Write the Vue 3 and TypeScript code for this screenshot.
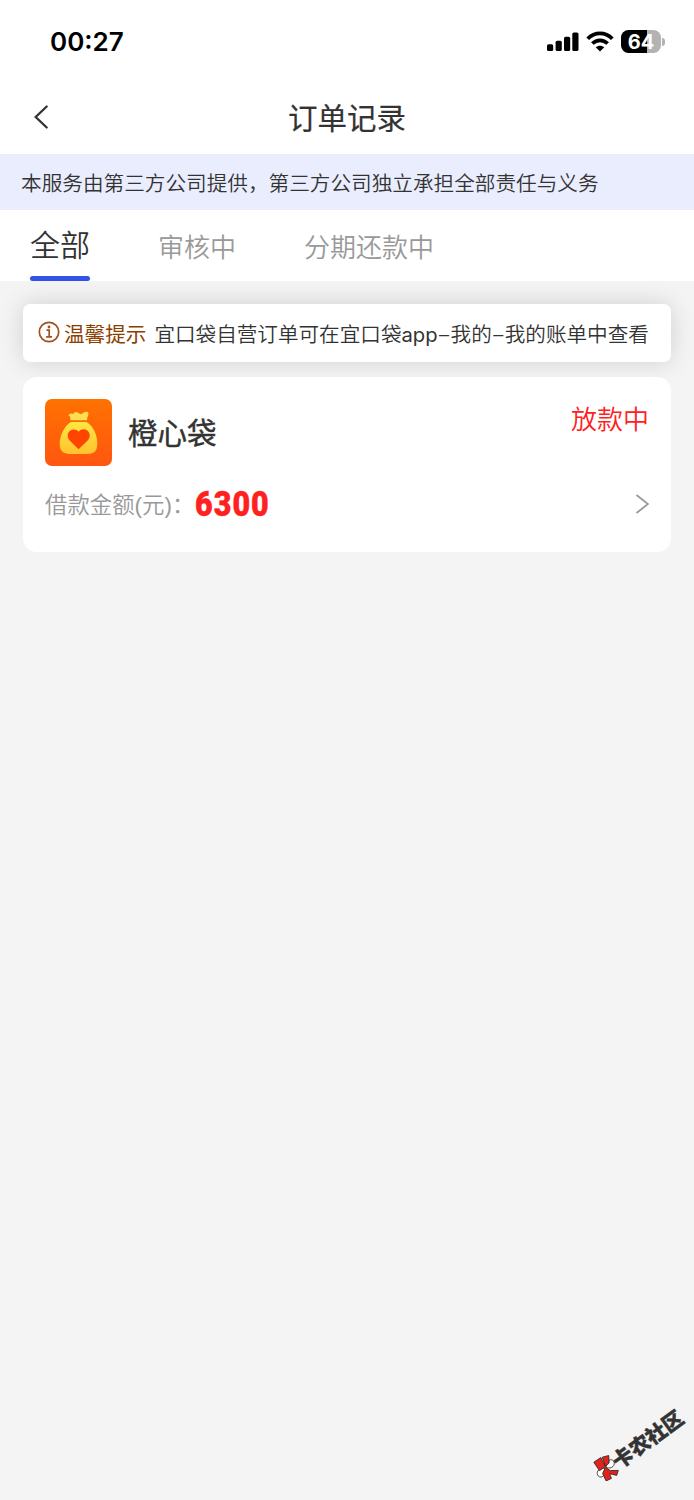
<script setup lang="ts">
import { ref } from 'vue'

interface Order {
  name: string
  status: string
  amount: number
}

const tabs: string[] = ['全部', '审核中', '分期还款中']
const active = ref<number>(0)
const orders: Order[] = [{ name: '橙心袋', status: '放款中', amount: 6300 }]
</script>

<template>
  <main class="page">
    <header class="top">
      <div class="status-bar">
        <span class="clock">00:27</span>
        <div class="indicators">
          <svg class="signal" width="32" height="20" viewBox="0 0 32 20">
            <rect x="0" y="12.3" width="6.2" height="6.7" rx="1.6" />
            <rect x="8.6" y="8.7" width="6.2" height="10.3" rx="1.6" />
            <rect x="17" y="4.7" width="6.2" height="14.3" rx="1.6" />
            <rect x="25.3" y="0.4" width="6.2" height="18.6" rx="1.6" />
          </svg>
          <svg class="wifi" width="28" height="20" viewBox="0 0 28 20">
            <path d="M1.7 6.7C8.6 -.4 19.4 -.4 26.3 6.7" />
            <path d="M6.4 11.5C10.7 7.2 17.3 7.2 21.6 11.5" />
            <path class="dot" d="M14 19.5 9.7 15.3C12.1 13.2 15.9 13.2 18.3 15.3Z" />
          </svg>
          <div class="battery"><span>64</span></div>
          <i class="battery-cap"></i>
        </div>
      </div>
      <nav class="nav">
        <svg class="back" width="16" height="26" viewBox="0 0 16 26">
          <path d="M13.7 2.5 2.7 13 13.7 23.5" />
        </svg>
        <h1>订单记录</h1>
      </nav>
    </header>

    <p class="banner">本服务由第三方公司提供，第三方公司独立承担全部责任与义务</p>

    <div class="tabs">
      <button
        v-for="(tab, i) in tabs"
        :key="tab"
        :class="['tab', { active: active === i }]"
        @click="active = i"
      >{{ tab }}</button>
    </div>

    <section class="content">
      <div class="notice">
        <svg class="info" width="22" height="22" viewBox="0 0 22 22">
          <circle cx="11" cy="11" r="9.7" />
          <path d="M8.5 9.2H11.2V15.6M8.1 15.8H14" />
          <circle class="point" cx="11" cy="6" r="1.4" />
        </svg>
        <b>温馨提示</b>
        <span class="message">宜口袋自营订单可在宜口袋<span class="latin">app</span><i class="dash">–</i>我的<i class="dash">–</i>我的账单中查看</span>
      </div>

      <article v-for="order in orders" :key="order.name" class="card">
        <div class="card-head">
          <svg class="logo" width="67" height="67" viewBox="0 0 67 67">
            <defs>
              <linearGradient id="tile" x1="0" y1="0" x2="0" y2="1">
                <stop offset="0" stop-color="#ff7200" />
                <stop offset="1" stop-color="#ff5610" />
              </linearGradient>
              <linearGradient id="bag" x1="0" y1="0" x2="0" y2="1">
                <stop offset="0" stop-color="#ffe842" />
                <stop offset="1" stop-color="#ffc22e" />
              </linearGradient>
            </defs>
            <rect width="67" height="67" rx="7" fill="url(#tile)" />
            <path fill="#ffdf52" d="M25.5 21.2 25 17.5 23.3 16.2Q25.4 13.5 28 15Q30.2 11.5 33.4 14Q37 16.2 39 13.2Q43.5 11.7 43.5 14.6Q43.3 17 42.4 18.2L42 21.2Z" />
            <path fill="url(#bag)" d="M26 23H41.5C47.5 26.5 52.3 35 52.3 44.5C52.3 51.5 49.2 55 43 55H24.5C18 55 14.7 51.5 14.7 45C14.7 35.5 20 26.5 26 23Z" />
            <path fill="#ff4500" d="M33.5 50.2 25.2 42C21.8 38.5 22.2 33.8 25 31.7C28 29.5 31.5 30.2 33.7 32.7C36 30 39.6 29.5 42.5 31.8C45.5 34.3 45.6 38.7 42.2 42Z" />
          </svg>
          <h2>{{ order.name }}</h2>
          <span class="state">{{ order.status }}</span>
        </div>
        <div class="card-row">
          <span class="label">借款金额(元)</span><span class="colon">：</span>
          <strong class="amount">{{ order.amount }}</strong>
          <svg class="more" width="14" height="20" viewBox="0 0 14 20">
            <path d="M1.5 1 13 10 1.5 19" />
          </svg>
        </div>
      </article>
    </section>

    <div class="watermark">
      <svg width="26" height="26" viewBox="0 0 26 26">
        <g stroke="#222" stroke-width=".8">
          <path fill="#fff" d="M13 12.5C13.5 5.5 18 3 20.5 6C23 10 19 14.5 13 12.5Z" />
          <path fill="#fff" d="M12 13C4 13.4 3 18 5.3 21C9 24 12.5 20.4 12 13Z" />
          <path fill="#e3231b" d="M.8 7.3 7.8 2.5 12.4 11.5 6.5 15.7Z" />
          <path fill="#e3231b" d="M9.2 2.2 15.7.5 16.2 7.8 12.6 11.5Z" />
          <path fill="#e3231b" d="M12.4 12.5 17.3 15.6 25.3 15.4 23.7 20.4 16.7 18.7 18.4 23.4 13.1 26 9.6 18.4Z" />
        </g>
      </svg>
      <span>卡农社区</span>
    </div>
  </main>
</template>

<style>
body {
  margin: 0;
  background: #f4f4f4;
}
</style>

<style scoped>
.page {
  position: relative;
  width: 694px;
  height: 1500px;
  overflow: hidden;
  background: #f4f4f4;
  color: #333;
  font-family: "Liberation Sans", "Noto Sans CJK SC", sans-serif;
}
h1, h2, p {
  margin: 0;
}
svg {
  display: block;
  flex: none;
}
.top {
  height: 154px;
  background: #fff;
}
.status-bar {
  display: flex;
  justify-content: space-between;
  align-items: center;
  height: 83px;
  padding: 0 29px 0 50px;
}
.clock {
  font: 600 26px/30px Inter, sans-serif;
  color: #000;
}
.indicators {
  display: flex;
  align-items: center;
}
.wifi {
  margin-left: 7px;
  overflow: visible;
  fill: none;
  stroke: #000;
  stroke-width: 3.8;
}
.wifi .dot {
  fill: #000;
  stroke: none;
}
.battery {
  width: 40px;
  height: 23px;
  margin-left: 7px;
  border-radius: 7.5px;
  background: linear-gradient(90deg, #000 65%, #b3b3b3 65%);
  color: #fff;
  font: 700 20px/24px Inter, sans-serif;
  text-align: center;
}
.battery-cap {
  width: 3px;
  height: 8px;
  margin-left: 1px;
  border-radius: 0 4px 4px 0;
  background: #b3b3b3;
}
.nav {
  display: grid;
  grid-template-columns: 1fr auto 1fr;
  align-items: center;
  height: 68px;
  padding: 0 33px;
}
.back {
  fill: none;
  stroke: #333;
  stroke-width: 2.3;
  stroke-linecap: round;
}
h1 {
  padding-top: 4px;
  font-size: 29.5px;
  font-weight: 400;
  line-height: 44px;
  -webkit-text-stroke: 0.2px #333;
}
.banner {
  height: 56px;
  padding-left: 21px;
  background: #eaedfd;
  font-size: 20.63px;
  line-height: 59px;
  font-weight: 350;
  white-space: nowrap;
}
.tabs {
  display: flex;
  gap: 68px;
  height: 71px;
  padding-left: 30px;
  background: #fff;
}
.tab {
  height: 71px;
  padding: 4px 0 0;
  border: 0;
  background: none;
  color: #999;
  font: 350 26px/66px "Liberation Sans", "Noto Sans CJK SC", sans-serif;
}
.tab.active {
  position: relative;
  padding: 1px 0 0;
  color: #333;
  font-size: 30px;
}
.tab.active::after {
  content: "";
  position: absolute;
  inset: auto 0 0;
  height: 5px;
  border-radius: 3px;
  background: #3252e8;
}
.content {
  display: grid;
  gap: 15px;
  padding: 23px;
}
.notice {
  display: flex;
  align-items: center;
  height: 58px;
  padding-left: 15px;
  border-radius: 7px;
  background: #fff;
  box-shadow: 0 0 24px rgba(0, 0, 0, 0.15);
  font-size: 20.6px;
  font-weight: 350;
  white-space: nowrap;
}
.info {
  margin-bottom: 2px;
  fill: none;
  stroke: #a1501f;
  stroke-width: 1.7;
}
.info .point {
  fill: #a1501f;
  stroke: none;
}
.notice b {
  margin-left: 4px;
  color: #8b4000;
  font-weight: 400;
}
.message {
  margin-left: 8px;
}
.latin {
  font-family: Inter, sans-serif;
  font-weight: 400;
  font-size: 20.2px;
}
.dash {
  display: inline-block;
  width: 13px;
  font: 300 20px/20px Inter, sans-serif;
  text-align: center;
}
.card {
  height: 175px;
  box-sizing: border-box;
  padding: 22px 22px 0;
  border-radius: 14px;
  background: #fff;
}
.card-head {
  display: flex;
  height: 67px;
}
h2 {
  margin-left: 16px;
  font-size: 29.5px;
  font-weight: 400;
  line-height: 69px;
  -webkit-text-stroke: 0.4px #333;
}
.state {
  margin-left: auto;
  color: #ff2020;
  font-size: 26px;
  font-weight: 350;
  line-height: 42px;
}
.card-row {
  display: flex;
  align-items: center;
  height: 76px;
  color: #999;
  font-size: 22.4px;
  font-weight: 350;
}
.label,
.colon {
  padding-bottom: 3px;
}
.colon {
  width: 23px;
}
.label {
  white-space: nowrap;
}
.amount {
  width: 74px;
  color: #ff2020;
  font: 900 35px/40px Roboto, sans-serif;
  letter-spacing: 1.2px;
  -webkit-text-stroke: 0.5px #ff2020;
  transform: translateY(1px) scaleX(0.87);
  transform-origin: left center;
}
.more {
  margin-left: auto;
  fill: none;
  stroke: #999;
  stroke-width: 1.8;
}
.watermark {
  position: absolute;
  left: 593px;
  top: 1455px;
  height: 26px;
}
.watermark span {
  position: absolute;
  left: 22px;
  top: -3px;
  color: #333;
  font-size: 20.5px;
  font-weight: 900;
  line-height: 24px;
  white-space: nowrap;
  -webkit-text-stroke: 0.4px #333;
  transform: rotate(-36deg);
  transform-origin: left center;
}
</style>
